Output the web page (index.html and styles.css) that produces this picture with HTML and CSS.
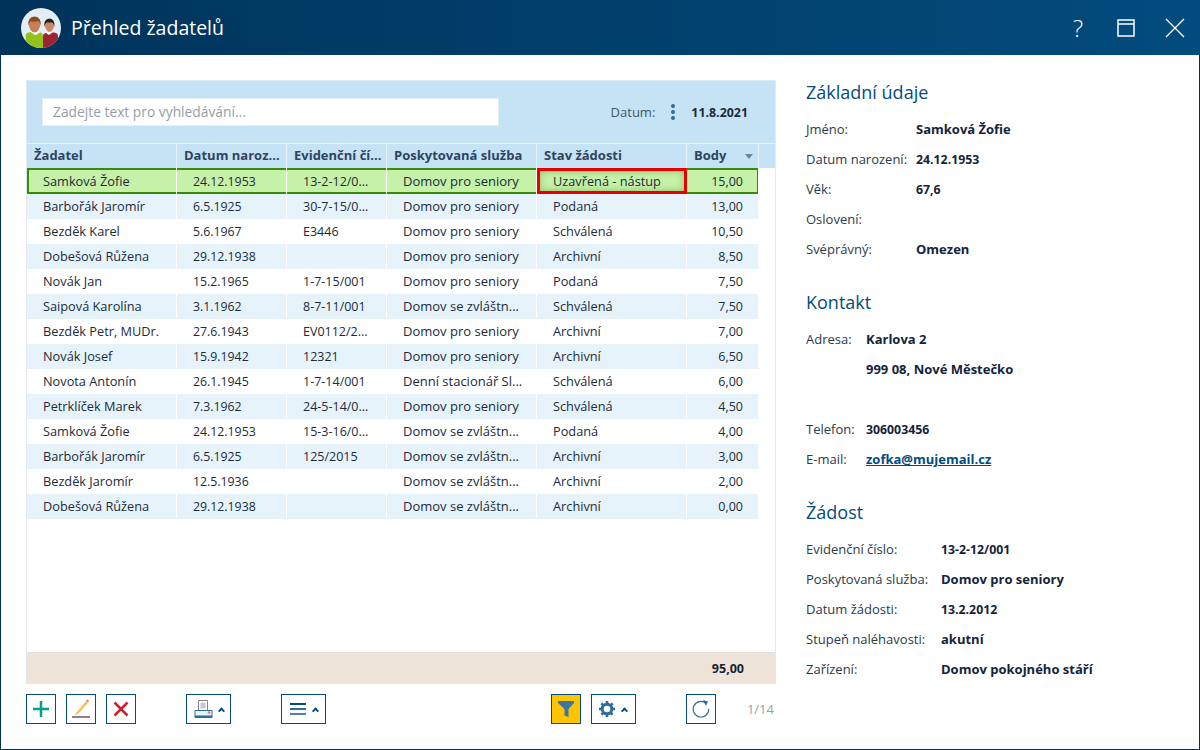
FILE: index.html
```html
<!DOCTYPE html>
<html lang="cs">
<head>
<meta charset="utf-8">
<title>Přehled žadatelů</title>
<link rel="stylesheet" href="styles.css">
</head>
<body>
<div class="window">
  <header class="titlebar">
    <svg class="avatar" viewBox="0 0 40 40" width="40" height="40">
      <defs><clipPath id="c"><circle cx="20" cy="20" r="20"/></clipPath></defs>
      <circle cx="20" cy="20" r="20" fill="#e3edf6"/>
      <g clip-path="url(#c)">
        <path d="M22 40V28q0-2.500 3-3l2-.5h6l2 .5q2 .5 2 3v12z" fill="#9b2335"/>
        <path d="M25 24h5.500l1 .5-3.700 2.500-3.300-2.500z" fill="#fff"/>
        <path d="M24 17q0-5 4.500-5t4.500 5q0 3-1.500 5-1.500 2-3 2t-3-2q-1.500-2-1.500-5z" fill="#c98a63"/>
        <path d="M23.300 19q-1-8 5.200-8.500 5.800.5 5 8.500-.5-3-2-4.500h-6q-1.500 1.500-2.200 4.500z" fill="#232323"/>
        <path d="M4.700 40V28q0-3 3-3.500l3-1h6l3 1q2.300.5 2.300 3.500v12z" fill="#95c11f"/>
        <path d="M10 23h8.500l1 1-5 3.200-5-3.200z" fill="#fff"/>
        <path d="M7.800 16q0-6 5.700-6t5.700 6q0 3.500-1.800 6-1.800 2.500-3.900 2.500t-3.900-2.500q-1.800-2.500-1.800-6z" fill="#c87f56"/>
        <path d="M7.300 18q-1-9 6.200-9.500 7.200.5 6.200 9.500-.5-3.500-2.200-5-4 1.500-8 .2-1.700 1.300-2.200 4.800z" fill="#8a4a22"/>
      </g>
    </svg>
    <h1 class="title">Přehled žadatelů</h1>
    <div class="winbtns">
      <span class="help">?</span>
      <svg width="18" height="18" viewBox="0 0 18 18"><path d="M1 1h16v16H1zM1 5h16" fill="none" stroke="#fff" stroke-width="1.500"/></svg>
      <svg width="20" height="20" viewBox="0 0 20 20"><path d="M1 1l18 18M19 1L1 19" fill="none" stroke="#fff" stroke-width="1.300"/></svg>
    </div>
  </header>
  <div class="content">
    <main class="main">
      <section class="grid">
        <div class="filterbar">
          <div class="search">Zadejte text pro vyhledávání...</div>
          <span class="datelabel">Datum:</span>
          <span class="dots"><i></i><i></i><i></i></span>
          <strong class="dateval">11.8.2021</strong>
        </div>
        <div class="row head">
          <div class="c c1">Žadatel</div><div class="c c2">Datum naroz...</div><div class="c c3">Evidenční čí...</div><div class="c c4">Poskytovaná služba</div><div class="c c5">Stav žádosti</div><div class="c c6">Body<span class="sort"></span></div><div class="gutter"></div>
        </div>
        <div class="rows">
          <div class="row sel"><div class="c c1">Samková Žofie</div><div class="c c2">24.12.1953</div><div class="c c3">13-2-12/0...</div><div class="c c4">Domov pro seniory</div><div class="c c5 focus">Uzavřená - nástup</div><div class="c c6">15,00</div></div>
          <div class="row alt"><div class="c c1">Barbořák Jaromír</div><div class="c c2">6.5.1925</div><div class="c c3">30-7-15/0...</div><div class="c c4">Domov pro seniory</div><div class="c c5">Podaná</div><div class="c c6">13,00</div></div>
          <div class="row"><div class="c c1">Bezděk Karel</div><div class="c c2">5.6.1967</div><div class="c c3">E3446</div><div class="c c4">Domov pro seniory</div><div class="c c5">Schválená</div><div class="c c6">10,50</div></div>
          <div class="row alt"><div class="c c1">Dobešová Růžena</div><div class="c c2">29.12.1938</div><div class="c c3"></div><div class="c c4">Domov pro seniory</div><div class="c c5">Archivní</div><div class="c c6">8,50</div></div>
          <div class="row"><div class="c c1">Novák Jan</div><div class="c c2">15.2.1965</div><div class="c c3">1-7-15/001</div><div class="c c4">Domov pro seniory</div><div class="c c5">Podaná</div><div class="c c6">7,50</div></div>
          <div class="row alt"><div class="c c1">Saipová Karolína</div><div class="c c2">3.1.1962</div><div class="c c3">8-7-11/001</div><div class="c c4">Domov se zvláštn...</div><div class="c c5">Schválená</div><div class="c c6">7,50</div></div>
          <div class="row"><div class="c c1">Bezděk Petr, MUDr.</div><div class="c c2">27.6.1943</div><div class="c c3">EV0112/2...</div><div class="c c4">Domov pro seniory</div><div class="c c5">Archivní</div><div class="c c6">7,00</div></div>
          <div class="row alt"><div class="c c1">Novák Josef</div><div class="c c2">15.9.1942</div><div class="c c3">12321</div><div class="c c4">Domov pro seniory</div><div class="c c5">Archivní</div><div class="c c6">6,50</div></div>
          <div class="row"><div class="c c1">Novota Antonín</div><div class="c c2">26.1.1945</div><div class="c c3">1-7-14/001</div><div class="c c4">Denní stacionář Sl...</div><div class="c c5">Schválená</div><div class="c c6">6,00</div></div>
          <div class="row alt"><div class="c c1">Petrklíček Marek</div><div class="c c2">7.3.1962</div><div class="c c3">24-5-14/0...</div><div class="c c4">Domov pro seniory</div><div class="c c5">Schválená</div><div class="c c6">4,50</div></div>
          <div class="row"><div class="c c1">Samková Žofie</div><div class="c c2">24.12.1953</div><div class="c c3">15-3-16/0...</div><div class="c c4">Domov se zvláštn...</div><div class="c c5">Podaná</div><div class="c c6">4,00</div></div>
          <div class="row alt"><div class="c c1">Barbořák Jaromír</div><div class="c c2">6.5.1925</div><div class="c c3">125/2015</div><div class="c c4">Domov se zvláštn...</div><div class="c c5">Archivní</div><div class="c c6">3,00</div></div>
          <div class="row"><div class="c c1">Bezděk Jaromír</div><div class="c c2">12.5.1936</div><div class="c c3"></div><div class="c c4">Domov se zvláštn...</div><div class="c c5">Archivní</div><div class="c c6">2,00</div></div>
          <div class="row alt"><div class="c c1">Dobešová Růžena</div><div class="c c2">29.12.1938</div><div class="c c3"></div><div class="c c4">Domov se zvláštn...</div><div class="c c5">Archivní</div><div class="c c6">0,00</div></div>
        </div>
        <div class="summary">95,00</div>
      </section>
      <div class="toolbar">
        <button class="btn sq">
          <svg width="18" height="18" viewBox="0 0 18 18"><path d="M9 1v16M1 9h16" stroke="#00a08a" stroke-width="2.500" fill="none"/></svg>
        </button>
        <button class="btn sq">
          <svg width="20" height="20" viewBox="0 0 20 20"><path d="M5 14L15 2l2 2L7 15l-3 1z" fill="#f5c15d"/><path d="M15 1.500l2 2 1-1.500-1.500-1.500z" fill="#e8707a"/><path d="M1 18h18" stroke="#8c8094" stroke-width="2"/></svg>
        </button>
        <button class="btn sq">
          <svg width="16" height="16" viewBox="0 0 16 16"><path d="M1.500 1.500l13 13M14.500 1.500l-13 13" stroke="#cf2030" stroke-width="2.500" fill="none"/></svg>
        </button>
        <button class="btn wide print">
          <svg width="19" height="19" viewBox="0 0 19 19"><path d="M4.500.500h9v10h-9z" fill="#fff" stroke="#8c8094"/><path d="M6.500 2.500h5v6h-5z" fill="#c9c6cf"/><path d="M1 10.500h17v7H1z" fill="#e6f3fb" stroke="#2e6c99"/><path d="M1 15.500h17v2H1z" fill="#2e6c99"/><circle cx="15" cy="12.500" r="1.300" fill="#f0707a"/></svg>
          <span class="caret"></span>
        </button>
        <button class="btn wide menu">
          <svg width="16" height="12" viewBox="0 0 16 12"><path d="M0 1h16" stroke="#034c7e" stroke-width="2"/><path d="M0 6h16" stroke="#2e6c99" stroke-width="2"/><path d="M0 11h16" stroke="#4f82a8" stroke-width="2"/></svg>
          <span class="caret"></span>
        </button>
        <button class="btn sq filter">
          <svg width="16" height="16" viewBox="0 0 16 16"><path d="M0 0h16v2L10.500 8v8l-4-1.500V8L0 2z" fill="#3f769f"/></svg>
        </button>
        <button class="btn wide gear">
          <svg width="16" height="16" viewBox="0 0 16 16"><circle cx="8" cy="8" r="4.800" fill="none" stroke="#2e6c99" stroke-width="3"/><path d="M8 0v16M0 8h16M2.300 2.300l11.400 11.400M13.700 2.300L2.300 13.700" stroke="#2e6c99" stroke-width="2.600" stroke-dasharray="3 10 3"/></svg>
          <span class="caret"></span>
        </button>
        <button class="btn sq refresh">
          <svg width="18" height="18" viewBox="0 0 18 18"><path d="M14 3.200A7.800 7.800 0 1 0 16.800 9" fill="none" stroke="#2e6c99" stroke-width="1.200"/><path d="M11 0l5 1.500-2 4.500z" fill="#2e6c99"/></svg>
        </button>
        <span class="pager">1/14</span>
      </div>
    </main>
    <aside class="side">
      <h2>Základní údaje</h2>
      <dl class="info w110"><dt>Jméno:</dt><dd>Samková Žofie</dd><dt>Datum narození:</dt><dd class="num">24.12.1953</dd><dt>Věk:</dt><dd class="num">67,6</dd><dt>Oslovení:</dt><dd></dd><dt>Svéprávný:</dt><dd>Omezen</dd></dl>
      <h2>Kontakt</h2>
      <dl class="info w60"><dt>Adresa:</dt><dd>Karlova 2</dd><dt></dt><dd>999 08, Nové Městečko</dd><dt></dt><dd></dd><dt>Telefon:</dt><dd class="num">306003456</dd><dt>E-mail:</dt><dd><a href="#">zofka@mujemail.cz</a></dd></dl>
      <h2>Žádost</h2>
      <dl class="info w135"><dt>Evidenční číslo:</dt><dd class="num">13-2-12/001</dd><dt>Poskytovaná služba:</dt><dd>Domov pro seniory</dd><dt>Datum žádosti:</dt><dd class="num">13.2.2012</dd><dt>Stupeň naléhavosti:</dt><dd>akutní</dd><dt>Zařízení:</dt><dd>Domov pokojného stáří</dd></dl>
    </aside>
  </div>
</div>
</body>
</html>
```
FILE: styles.css
```css
* { box-sizing: border-box; }
html, body { margin: 0; height: 100%; }
body { font-family: "Open Sans", sans-serif; font-size: 13px; color: #1c2b3a; background: #fff; overflow: hidden; }
.window { width: 1200px; height: 750px; display: flex; flex-direction: column; border: 1px solid #00335a; border-top: 0; background: #fff; }
.titlebar { height: 55px; flex: none; margin: 0 -1px; display: flex; align-items: center; padding-left: 21px; background: linear-gradient(90deg, #00335a 0%, #034c7e 100%); color: #fff; }
.avatar { flex: none; }
.title { margin: 0 0 0 10px; font-size: 19.5px; font-weight: 400; line-height: 55px; }
.winbtns { margin-left: auto; display: flex; align-items: center; height: 100%; padding-right: 15px; gap: 30px; }
.help { font-size: 24px; font-weight: 300; line-height: 1; width: 12px; margin-right: 2px; }
.content { flex: 1; display: flex; padding: 25px 0 0 25px; min-height: 0; }
.main { width: 750px; flex: none; }
.grid { height: 604px; display: flex; flex-direction: column; background: #fff; border: 1px solid #e4e8f0; border-top-color: #dce9f3; }
.filterbar { height: 62px; flex: none; background: #c6e3f6; display: flex; align-items: center; padding: 0 27px 0 15px; }
.search { width: 457px; height: 28px; background: #fff; border: 1px solid #e4eef6; padding-left: 10px; line-height: 25px; color: #9a9ea4; font-size: 13.8px; }
.datelabel { margin-left: auto; color: #44546a; }
.dots { display: flex; flex-direction: column; gap: 2px; margin: 0 16px; }
.dots i { width: 4px; height: 4px; border-radius: 50%; background: #2e6c99; }
.dateval { font-weight: 700; font-size: 12.4px; }
.row { display: flex; height: 25px; line-height: 26px; }
.head { height: 25px; background: #c6e3f6; font-weight: 700; color: #2f4460; border-top: 1px solid #e4f1fa; line-height: 22px; }
.c { border-right: 1px solid #fff; padding-left: 16px; white-space: nowrap; overflow: hidden; }
.head .c { padding-left: 7px; border-right-color: #e4f1fa; font-size: 13px; }
.c1 { width: 150px; font-size: 12.75px; }
.c2 { width: 110px; font-size: 12.3px; }
.c3 { width: 100px; font-size: 12.5px; }
.c4 { width: 150px; font-size: 13px; }
.c5 { width: 150px; font-size: 12.75px; }
.c6 { width: 72px; font-size: 12.5px; text-align: right; padding: 0 15px 0 0; }
.rows .c1, .rows .c4, .rows .c5 { line-height: 24px; }
.rows .sel .c1, .rows .sel .c4, .rows .sel .c5 { line-height: 26px; }
.head .c6 { position: relative; text-align: left; }
.sort { position: absolute; right: 5px; top: 10px; border: 4px solid transparent; border-top: 5px solid #6d8398; border-bottom: 0; }
.rows { flex: 1; width: 732px; }
.rows .row { border-bottom: 1px solid transparent; }
.alt { background: #e6f3fb; }
.sel { background: #c6f1a8; height: 26px; box-shadow: inset 0 0 0 2px #3a8a0a; border: 0 !important; line-height: 28px; }
.focus { border-right: 0; box-shadow: inset 0 0 0 3px #e60000, inset 0 0 6px 4px rgba(80,120,40,.35); }
.summary { height: 31px; flex: none; background: #eee5d8; border-top: 1px solid #e2e0e4; text-align: right; font-weight: 700; font-size: 12.5px; padding: 0 31px; line-height: 31px; color: #15243a; }
.toolbar { display: flex; align-items: center; height: 30px; margin-top: 10px; }
.btn { height: 30px; background: #fff; border: 1px solid #034c7e; padding: 0; display: inline-flex; align-items: center; justify-content: center; flex: none; }
.sq { width: 30px; margin-right: 10px; }
.wide { width: 45px; }
.print { margin-left: 40px; gap: 6px; }
.menu { margin-left: 50px; gap: 7px; }
.filter { margin-left: auto; background: #fdc500; margin-right: 10px; }
.gear { gap: 7px; margin-right: 50px; }
.refresh { margin-right: 31px; }
.caret { width: 5px; height: 5px; border-left: 2px solid #034c7e; border-top: 2px solid #034c7e; transform: rotate(45deg) translate(1px, 1px); }
.pager { color: #9aa0a8; margin-right: 2px; }
.side { margin-left: 30px; flex: 1; }
.side h2 { font-size: 18px; font-weight: 400; color: #034c7e; margin: 0; height: 25px; line-height: 25px; }
.info { margin: 10px 0 25px; display: grid; row-gap: 0; grid-auto-rows: 30px; line-height: 28px; }
.info dt { color: #2b3a4c; margin: 0; }
.info dd { font-weight: 700; margin: 0; color: #15243a; white-space: nowrap; }
.info .num { font-size: 12.3px; line-height: 30px; }
.info a { color: #034c7e; }
.w110 { grid-template-columns: 110px 1fr; }
.w60 { grid-template-columns: 60px 1fr; }
.w135 { grid-template-columns: 135px 1fr; }
```
